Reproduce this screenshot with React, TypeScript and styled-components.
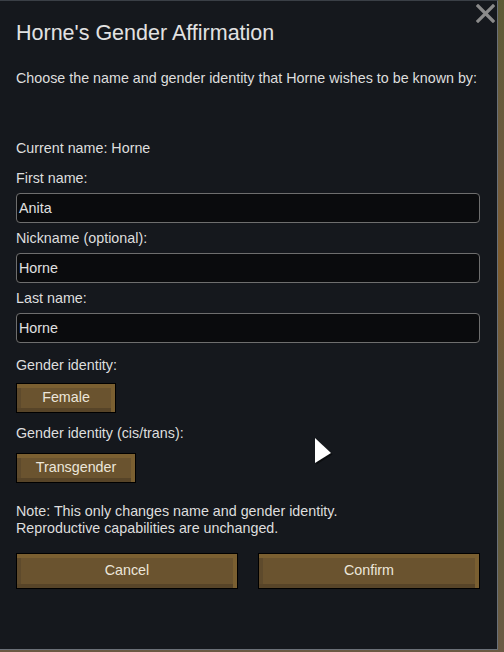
import React from "react";
import styled, { createGlobalStyle } from "styled-components";

const Global = createGlobalStyle`
  html, body {
    margin: 0;
    padding: 0;
    width: 504px;
    height: 652px;
    overflow: hidden;
    background: linear-gradient(180deg, #5d5b36 0%, #6e5a3f 25%, #7d5a2c 40%, #6a5b40 60%, #5f5a3a 80%, #6b5a44 100%);
    font-family: "Liberation Sans", Arial, sans-serif;
  }
`;

const Panel = styled.div`
  position: relative;
  box-sizing: border-box;
  width: 498px;
  height: 650px;
  background: #15181d;
  border-top: 1px solid #3a3f46;
  border-right: 1px solid #6a7078;
  border-bottom: 1px solid #6a7078;
  padding: 20px 17px 0 16px;
  color: #dedede;
  display: flex;
  flex-direction: column;
`;

const Title = styled.div`
  font-size: 21.5px;
  line-height: 24px;
  height: 24px;
  color: #e2e2e2;
`;

const Text = styled.div<{ $mt: number }>`
  font-size: 14.3px;
  line-height: 18px;
  height: 18px;
  margin-top: ${(p) => p.$mt}px;
  white-space: nowrap;
`;

const Note = styled.div`
  font-size: 14.3px;
  line-height: 17px;
  margin-top: 20px;
`;

const Field = styled.div`
  box-sizing: border-box;
  height: 30px;
  margin-top: 6px;
  border: 1px solid #6e6e6e;
  border-radius: 4px;
  background: #0a0b0d;
  padding-left: 2px;
  font-size: 14.3px;
  line-height: 28px;
  color: #e0e0e0;
`;

const Bevel = styled.button<{ $w?: number; $h: number; $mt: number }>`
  box-sizing: border-box;
  width: ${(p) => (p.$w ? `${p.$w}px` : "100%")};
  height: ${(p) => p.$h}px;
  margin-top: ${(p) => p.$mt}px;
  border: 1px solid #000;
  background: #6a532f;
  box-shadow:
    inset 0 4px 0 #7a5f31,
    inset -4px 0 0 #7a5f31,
    inset 0 -4px 0 #574428,
    inset 4px 0 0 #5e4a2c;
  color: #ece6da;
  font-family: "Liberation Sans", Arial, sans-serif;
  font-size: 14.3px;
  padding: 0 0 2px 0;
  display: flex;
  align-items: center;
  justify-content: center;
  cursor: default;
`;

const ButtonRow = styled.div`
  display: grid;
  grid-template-columns: 222px 222px;
  justify-content: space-between;
  margin-top: 16px;
`;

const Close = styled.div`
  position: absolute;
  top: 3px;
  right: 2px;
  width: 19px;
  height: 19px;
`;

const Pointer = styled.div`
  position: absolute;
  left: 313px;
  top: 435px;
  width: 24px;
  height: 30px;
`;

export default function App() {
  return (
    <>
      <Global />
      <Panel>
        <Close>
          <svg width="19" height="19" viewBox="0 0 19 19">
            <path d="M2 2 L17 17 M17 2 L2 17" stroke="#8a8a8a" strokeWidth="3.2" strokeLinecap="square" />
          </svg>
        </Close>
        <Title>Horne's Gender Affirmation</Title>
        <Text $mt={24}>Choose the name and gender identity that Horne wishes to be known by:</Text>
        <Text $mt={52}>Current name: Horne</Text>
        <Text $mt={12}>First name:</Text>
        <Field>Anita</Field>
        <Text $mt={6}>Nickname (optional):</Text>
        <Field>Horne</Field>
        <Text $mt={6}>Last name:</Text>
        <Field>Horne</Field>
        <Text $mt={13}>Gender identity:</Text>
        <Bevel $w={100} $h={30} $mt={9}>Female</Bevel>
        <Text $mt={11}>Gender identity (cis/trans):</Text>
        <Bevel $w={120} $h={30} $mt={11}>Transgender</Bevel>
        <Note>
          Note: This only changes name and gender identity.
          <br />
          Reproductive capabilities are unchanged.
        </Note>
        <ButtonRow>
          <Bevel $h={36} $mt={0}>Cancel</Bevel>
          <Bevel $h={36} $mt={0}>Confirm</Bevel>
        </ButtonRow>
        <Pointer>
          <svg width="24" height="30" viewBox="0 0 24 30">
            <path d="M3.5 3.5 L19.5 18.5 L3.5 28.5 Z" fill="#000" opacity="0.45" />
            <path d="M2 2 L18 17 L2 27 Z" fill="#ffffff" />
          </svg>
        </Pointer>
      </Panel>
    </>
  );
}
